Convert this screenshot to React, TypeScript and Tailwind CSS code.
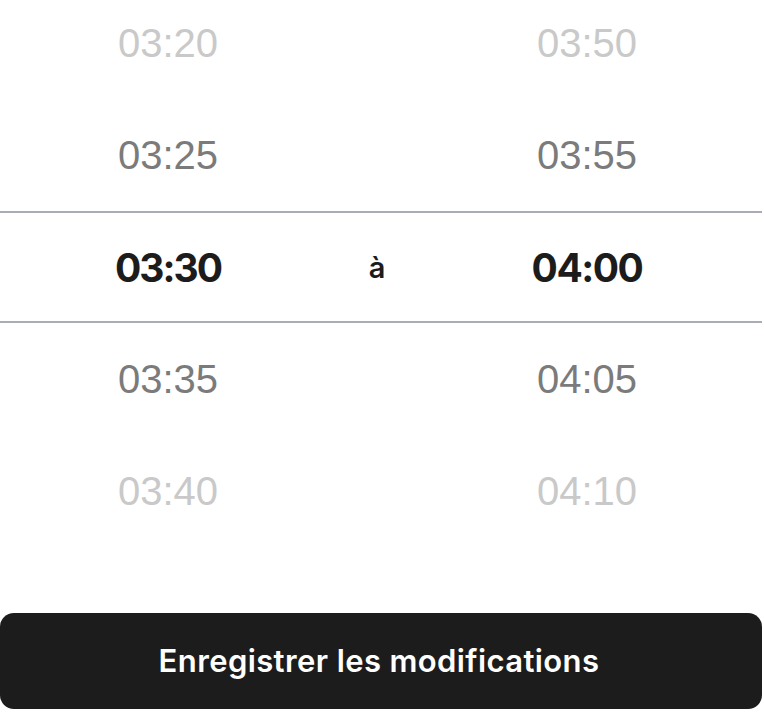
import React from "react";

const left = ["03:20", "03:25", "03:30", "03:35", "03:40"];
const right = ["03:50", "03:55", "04:00", "04:05", "04:10"];
const colors = ["text-[#c9c9c9]", "text-[#7b7b7b]", "", "text-[#7b7b7b]", "text-[#c9c9c9]"];

export default function App() {
  return (
    <div className="w-[762px] bg-white" style={{ fontFamily: "Inter, 'Liberation Sans', sans-serif" }}>
      <div className="h-[546px] overflow-hidden">
        <div className="-mt-[13px] flex flex-col">
          {left.map((l, i) =>
            i === 2 ? (
              <div
                key={i}
                className="grid h-[112px] grid-cols-[336px_82px_338px] items-center border-y-2 border-[#a9acb7] text-[#1c1c1c]"
              >
                <div className="text-center text-[39px] font-bold leading-none tracking-[-2px]">{l}</div>
                <div className="text-center text-[29px] font-semibold leading-none">à</div>
                <div className="text-center text-[39px] font-bold leading-none tracking-[-1.5px]">{right[i]}</div>
              </div>
            ) : (
              <div
                key={i}
                className={`grid h-[112px] grid-cols-[336px_82px_338px] items-center ${colors[i]}`}
                style={{ fontFamily: "'Liberation Sans', Arial, sans-serif" }}
              >
                <div className="text-center text-[40px] leading-none">{l}</div>
                <div />
                <div className="text-center text-[40px] leading-none">{right[i]}</div>
              </div>
            )
          )}
        </div>
      </div>
      <div className="mt-[67px] flex h-[96px] items-center justify-center rounded-[14px] bg-[#1c1c1c]">
        <span className="pr-[4px] text-[31px] font-semibold tracking-[0.4px] text-white">Enregistrer les modifications</span>
      </div>
    </div>
  );
}
